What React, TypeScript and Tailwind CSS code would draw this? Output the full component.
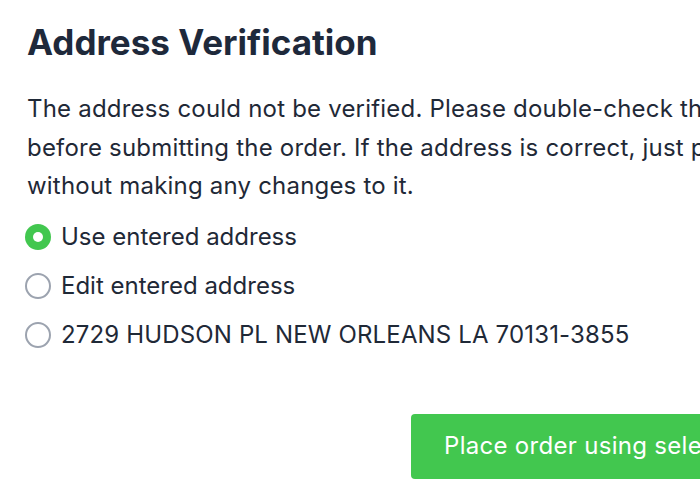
export default function App() {
  return (
    <div className="w-[700px] h-[500px] overflow-hidden bg-white">
      <div className="w-[1000px] pl-[27px] pt-[20px] font-['Inter',sans-serif] text-[#1f2937]">
        <h1 className="text-[35px] font-bold text-[#1e293b] leading-[44px]">Address Verification</h1>
        <p className="mt-[26px] text-[24px] tracking-[0.2px] leading-[38.5px] whitespace-nowrap">
          The address could not be verified. Please double-check the address
          <br />
          before submitting the order. If the address is correct, just place the order
          <br />
          without making any changes to it.
        </p>
        <div className="mt-[18px] flex flex-col gap-[23px]">
          <label className="flex items-center gap-[10px] text-[24px] leading-[26px] -ml-[2px]">
            <span className="w-[26px] h-[26px] rounded-full bg-[#42c74f] flex items-center justify-center">
              <span className="w-[10px] h-[10px] rounded-full bg-white" />
            </span>
            Use entered address
          </label>
          <label className="flex items-center gap-[10px] text-[24px] leading-[26px] -ml-[2px]">
            <span className="w-[26px] h-[26px] rounded-full border-2 border-[#9ca3af]" />
            Edit entered address
          </label>
          <label className="flex items-center gap-[10px] text-[24px] leading-[26px] -ml-[2px] tracking-[0.15px]">
            <span className="w-[26px] h-[26px] rounded-full border-2 border-[#9ca3af]" />
            2729 HUDSON PL NEW ORLEANS LA 70131-3855
          </label>
        </div>
        <div className="mt-[66px] pl-[384px]">
          <button className="h-[65px] px-[33px] rounded-[4px] bg-[#42c74f] text-white text-[24px] tracking-[0.3px] whitespace-nowrap">
            Place order using selected address
          </button>
        </div>
      </div>
    </div>
  )
}
